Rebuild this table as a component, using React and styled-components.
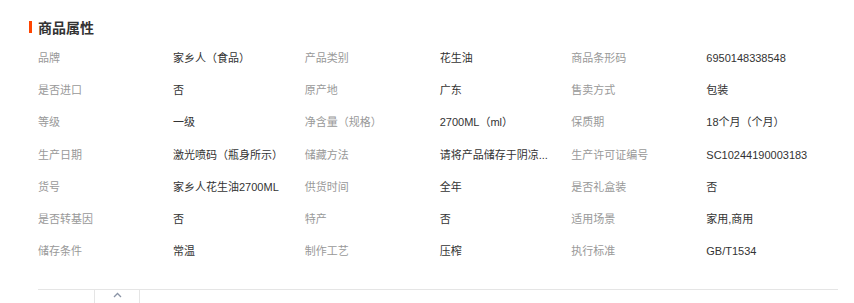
import React from "react";
import styled, { createGlobalStyle } from "styled-components";

const Global = createGlobalStyle`
  html, body { margin: 0; padding: 0; background: #fff; }
  body { font-family: "Liberation Sans", "Noto Sans CJK SC", sans-serif; }
`;

const Page = styled.div`
  width: 854px;
  height: 303px;
  overflow: hidden;
  padding: 20px 0 0 29px;
  box-sizing: border-box;
`;

const Title = styled.h3`
  margin: 0;
  display: flex;
  align-items: center;
  gap: 6px;
  height: 14px;
  font-size: 14px;
  line-height: 14px;
  font-weight: bold;
  color: #333;
  font-family: "Noto Sans CJK SC", sans-serif;
  &::before {
    content: "";
    width: 3px;
    height: 12px;
    background: #ff4400;
  }
`;

const Grid = styled.div`
  margin: 8px 0 0 9px;
  width: 800px;
  display: grid;
  grid-template-columns: repeat(3, 135px 131.66px);
  grid-auto-rows: 32.2px;
  align-items: center;
  font-size: 11px;
  line-height: 14px;
`;

const Label = styled.div`
  color: #999;
  white-space: nowrap;
`;

const Value = styled.div`
  color: #333;
  white-space: nowrap;
`;

const Footer = styled.div`
  margin: 22px 0 0 9px;
  width: 800px;
  border-top: 1px solid #e5e5e5;
  height: 20px;
  display: flex;
`;

const Tab = styled.div`
  margin-left: 56px;
  width: 46px;
  border-left: 1px solid #e5e5e5;
  border-right: 1px solid #e5e5e5;
  display: flex;
  justify-content: center;
  padding-top: 2px;
  box-sizing: border-box;
`;

const rows = [
  ["品牌", "家乡人（食品）", "产品类别", "花生油", "商品条形码", "6950148338548"],
  ["是否进口", "否", "原产地", "广东", "售卖方式", "包装"],
  ["等级", "一级", "净含量（规格）", "2700ML（ml）", "保质期", "18个月（个月）"],
  ["生产日期", "激光喷码（瓶身所示）", "储藏方法", "请将产品储存于阴凉...", "生产许可证编号", "SC10244190003183"],
  ["货号", "家乡人花生油2700ML", "供货时间", "全年", "是否礼盒装", "否"],
  ["是否转基因", "否", "特产", "否", "适用场景", "家用,商用"],
  ["储存条件", "常温", "制作工艺", "压榨", "执行标准", "GB/T1534"],
];

export default function App() {
  return (
    <Page>
      <Global />
      <Title>商品属性</Title>
      <Grid>
        {rows.map((r, i) =>
          r.map((t, j) =>
            j % 2 === 0 ? (
              <Label key={`${i}-${j}`}>{t}</Label>
            ) : (
              <Value key={`${i}-${j}`}>{t}</Value>
            )
          )
        )}
      </Grid>
      <Footer>
        <Tab>
          <svg width="9" height="6" viewBox="0 0 9 6">
            <polyline points="1,5 4.5,1.5 8,5" fill="none" stroke="#8a94a6" strokeWidth="1.3" />
          </svg>
        </Tab>
      </Footer>
    </Page>
  );
}
